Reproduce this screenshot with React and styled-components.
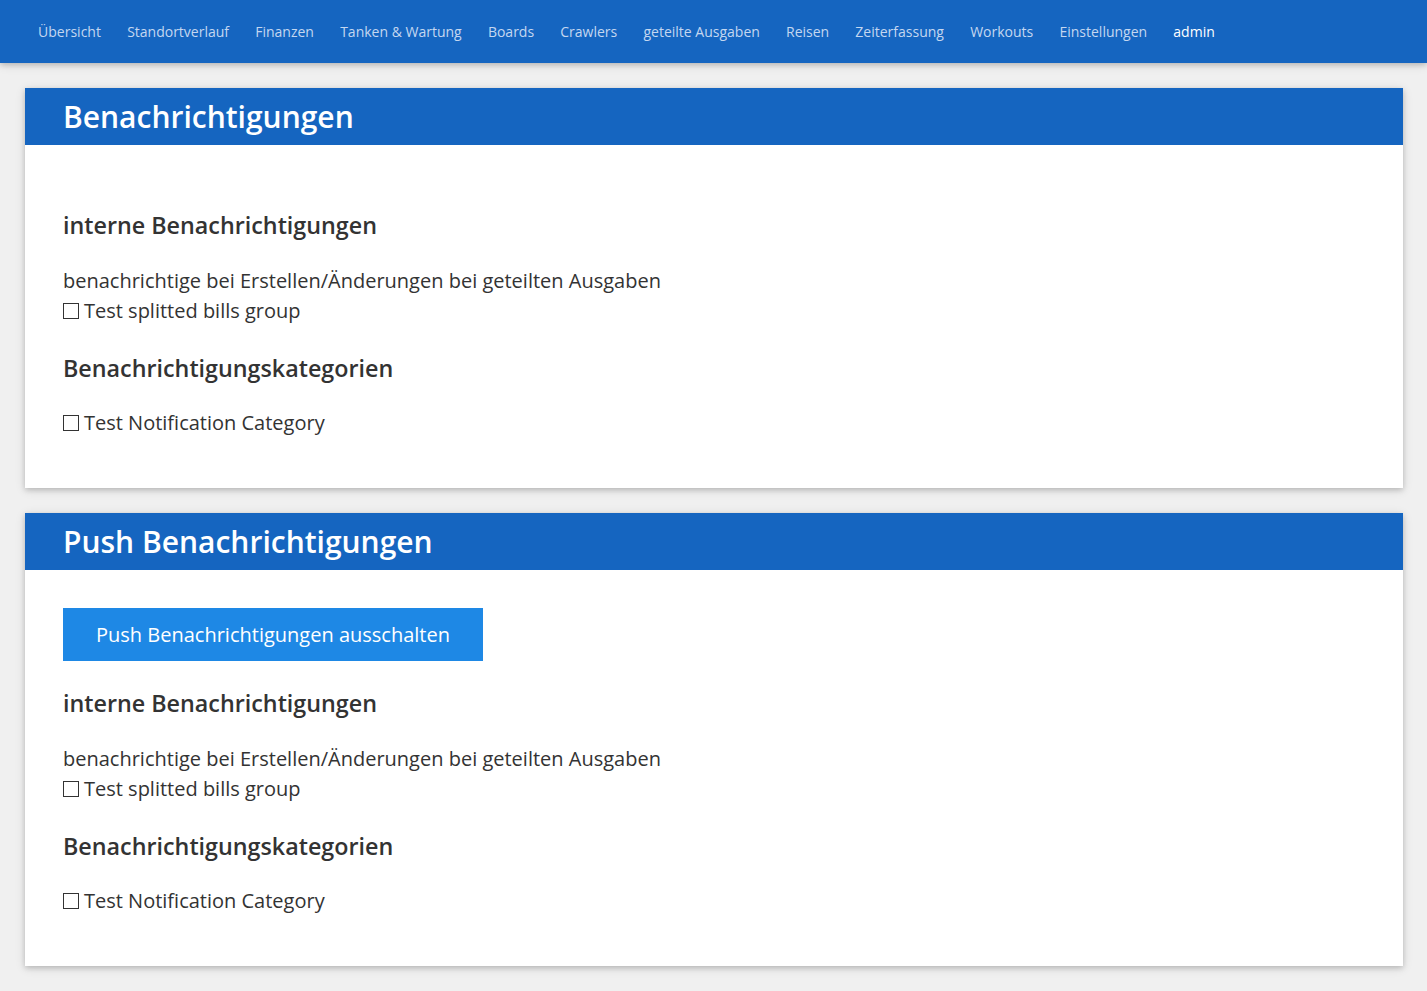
import React from 'react';
import styled, { createGlobalStyle } from 'styled-components';

const GlobalStyle = createGlobalStyle`
  html, body {
    margin: 0;
    padding: 0;
    background: #f0f0f0;
    font-family: "Open Sans", "Noto Sans", sans-serif;
    color: #333;
  }
  * { box-sizing: border-box; }
`;

const navItems = [
  'Übersicht', 'Standortverlauf', 'Finanzen', 'Tanken & Wartung', 'Boards', 'Crawlers',
  'geteilte Ausgaben', 'Reisen', 'Zeiterfassung', 'Workouts', 'Einstellungen',
];

function Section({ withButton }) {
  return (
    <Card>
      <CardHead>
        <CardTitle>{withButton ? 'Push Benachrichtigungen' : 'Benachrichtigungen'}</CardTitle>
      </CardHead>
      <CardBody>
        {withButton && <PushButton>Push Benachrichtigungen ausschalten</PushButton>}
        <SubTitle>interne Benachrichtigungen</SubTitle>
        <Text>benachrichtige bei Erstellen/Änderungen bei geteilten Ausgaben</Text>
        <CheckRow>
          <Box type="checkbox" />
          Test splitted bills group
        </CheckRow>
        <SubTitle>Benachrichtigungskategorien</SubTitle>
        <CheckRow $spaced>
          <Box type="checkbox" />
          Test Notification Category
        </CheckRow>
      </CardBody>
    </Card>
  );
}

export default function App() {
  return (
    <>
      <GlobalStyle />
      <NavBar>
        {navItems.map((item) => (
          <NavLink key={item}>{item}</NavLink>
        ))}
        <NavLink $active>admin</NavLink>
      </NavBar>
      <Main>
        <Section />
        <Section withButton />
      </Main>
    </>
  );
}

const NavBar = styled.nav`
  height: 63px;
  background: #1565c0;
  display: flex;
  align-items: center;
  padding: 0 25px;
  box-shadow: 0 2px 5px 0 rgba(0,0,0,0.16), 0 2px 10px 0 rgba(0,0,0,0.12);
  position: relative;
  z-index: 2;
`;

const NavLink = styled.a`
  font-size: 14px;
  padding: 0 13.1px;
  color: ${(p) => (p.$active ? '#ffffff' : '#c4d7f0')};
  font-weight: 400;
  cursor: pointer;
  white-space: nowrap;
`;

const Main = styled.main`
  display: flex;
  flex-direction: column;
  gap: 25px;
  padding: 25px 24px 25px 25px;
`;

const Card = styled.section`
  background: #fff;
  box-shadow: 0 2px 5px 0 rgba(0,0,0,0.16), 0 2px 10px 0 rgba(0,0,0,0.12);
`;

const CardHead = styled.header`
  height: 57px;
  background: #1565c0;
  display: flex;
  align-items: center;
  padding: 0 38px;
`;

const CardTitle = styled.h1`
  margin: 0;
  font-size: 30px;
  font-weight: 600;
  color: #fff;
  line-height: 1;
`;

const CardBody = styled.div`
  padding: 38px 38px 50px;
  display: flex;
  flex-direction: column;
  align-items: flex-start;
`;

const PushButton = styled.button`
  height: 53px;
  width: 420px;
  border: none;
  background: #1e88e5;
  color: #fff;
  font-family: inherit;
  font-size: 20px;
  padding: 0;
  cursor: pointer;
`;

const SubTitle = styled.h2`
  margin: 24px 0 23px;
  font-size: 23.3px;
  font-weight: 600;
  line-height: 36px;
  color: #333;
`;

const Text = styled.div`
  font-size: 20px;
  line-height: 30px;
`;

const CheckRow = styled.label`
  display: flex;
  align-items: center;
  font-size: 20px;
  line-height: 30px;
  margin-top: ${(p) => (p.$spaced ? '-1px' : '0')};
`;

const Box = styled.input`
  appearance: none;
  width: 16px;
  height: 16px;
  border: 1px solid #333;
  margin: 0 5px 0 0;
  background: #fff;
`;
